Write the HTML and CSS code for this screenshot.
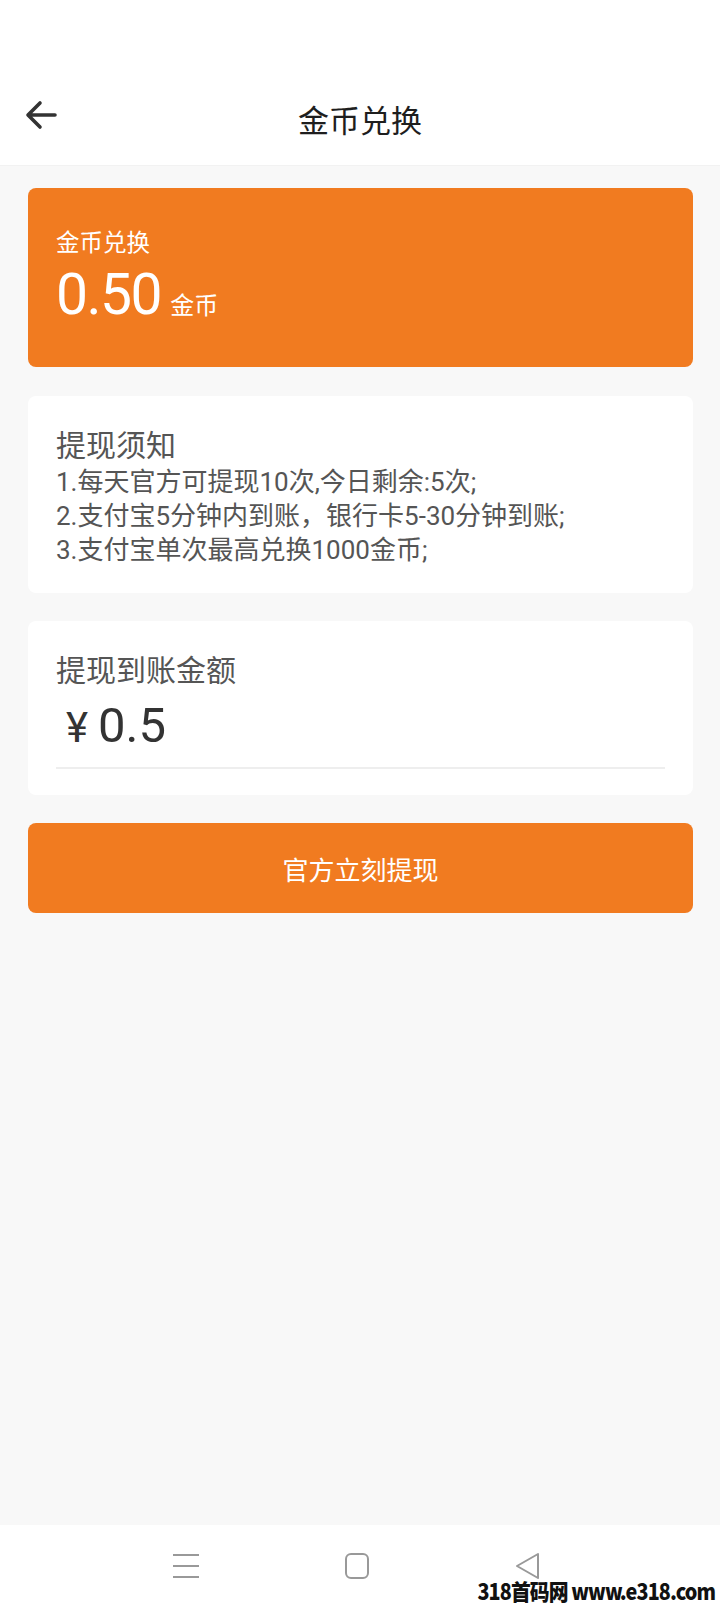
FILE: index.html
```html
<!DOCTYPE html>
<html lang="zh">
<head>
<meta charset="utf-8">
<title>金币兑换</title>
<link rel="stylesheet" href="styles.css">
</head>
<body>
<div class="page">
  <header class="header">
    <div class="header-bar">
      <span class="back">
        <svg width="34" height="34" viewBox="0 0 34 34"><path d="M31 17H5M16 5L4 17l12 12" fill="none" stroke="#333" stroke-width="3.6" stroke-linecap="round" stroke-linejoin="round"/></svg>
      </span>
      <h1 class="title">金币兑换</h1>
    </div>
  </header>
  <main class="content">
    <section class="balance-card">
      <div class="balance-label">金币兑换</div>
      <div class="balance-row"><span class="balance-num">0.50</span><span class="balance-unit">金币</span></div>
    </section>
    <section class="card notice">
      <div class="card-title">提现须知</div>
      <p class="notice-line">1.每天官方可提现10次,今日剩余:5次;</p>
      <p class="notice-line">2.支付宝5分钟内到账，银行卡5-30分钟到账;</p>
      <p class="notice-line">3.支付宝单次最高兑换1000金币;</p>
    </section>
    <section class="card amount">
      <div class="card-title">提现到账金额</div>
      <div class="amount-value">¥<span class="amount-num">0.5</span></div>
      <div class="amount-line"></div>
    </section>
    <button class="submit">官方立刻提现</button>
  </main>
  <nav class="sysnav">
    <svg width="28" height="28" viewBox="0 0 28 28"><path d="M1 3h26M1 14h26M1 25h26" stroke="#999" stroke-width="2"/></svg>
    <svg width="28" height="28" viewBox="0 0 28 28"><rect x="3" y="2" width="22" height="24" rx="5" fill="none" stroke="#999" stroke-width="2"/></svg>
    <svg width="28" height="28" viewBox="0 0 28 28"><path d="M24 2L3 14l21 12z" fill="none" stroke="#999" stroke-width="2" stroke-linejoin="round"/></svg>
    <span class="watermark">318首码网 www.e318.com</span>
  </nav>
</div>
</body>
</html>
```
FILE: styles.css
```css
* { box-sizing: border-box; }
html, body { margin: 0; padding: 0; }
body {
  background: #f8f8f8;
  font-family: Roboto, "Noto Sans CJK SC", sans-serif;
  color: #333;
}
.page {
  width: 720px;
  height: 1612px;
  display: flex;
  flex-direction: column;
}
.header {
  background: #fff;
  height: 166px;
  padding-top: 84px;
  border-bottom: 1px solid #f2f2f2;
}
.header-bar {
  height: 68px;
  display: flex;
  align-items: center;
  justify-content: center;
  position: relative;
}
.back {
  position: absolute;
  left: 24px;
  top: 14px;
  display: flex;
}
.title {
  margin: 0;
  font-size: 31px;
  font-weight: 400;
  color: #1e1e1e;
}
.content {
  flex: 1;
  padding: 22px 27px 0 28px;
  display: flex;
  flex-direction: column;
}
.balance-card {
  background: #f17b20;
  border-radius: 8px;
  height: 179px;
  padding: 39px 28px 0;
  color: #fff;
}
.balance-label {
  font-size: 23.5px;
  line-height: 33px;
}
.balance-row {
  display: flex;
  align-items: baseline;
}
.balance-num {
  font-size: 57px;
  line-height: 70px;
  letter-spacing: -1.5px;
}
.balance-unit {
  font-size: 24px;
  margin-left: 9px;
}
.card {
  background: #fff;
  border-radius: 8px;
  margin-top: 29px;
  padding: 31px 28px 0;
}
.notice {
  height: 197px;
  color: #555;
}
.card-title {
  font-size: 30px;
  line-height: 38px;
  color: #555;
}
.notice-line {
  margin: 0;
  font-size: 26px;
  line-height: 34px;
}
.amount {
  height: 174px;
  margin-top: 28px;
  padding-top: 31px;
}
.amount-value {
  font-size: 42px;
  line-height: 60px;
  color: #333;
  padding-left: 10px;
  margin-top: 6px;
}
.amount-num {
  font-size: 49px;
  margin-left: 10px;
}
.amount-line {
  height: 2px;
  background: #eeeeee;
  margin: 9px 0 0;
  width: 609px;
}
.submit {
  margin-top: 28px;
  height: 90px;
  border: none;
  border-radius: 8px;
  background: #f17b20;
  color: #fff;
  font-family: "Noto Sans CJK SC", sans-serif;
  font-size: 26px;
  width: 100%;
}
.sysnav {
  height: 87px;
  background: #fff;
  display: flex;
  align-items: center;
  justify-content: center;
  gap: 143px;
  position: relative;
  padding-bottom: 6px;
  padding-right: 6px;
}
.watermark {
  position: absolute;
  right: 5px;
  bottom: 6px;
  font-family: "Noto Sans CJK SC", sans-serif;
  font-weight: 900;
  font-size: 22px;
  color: #111;
  letter-spacing: -1px;
  transform: scaleX(0.9);
  transform-origin: right center;
}
```
